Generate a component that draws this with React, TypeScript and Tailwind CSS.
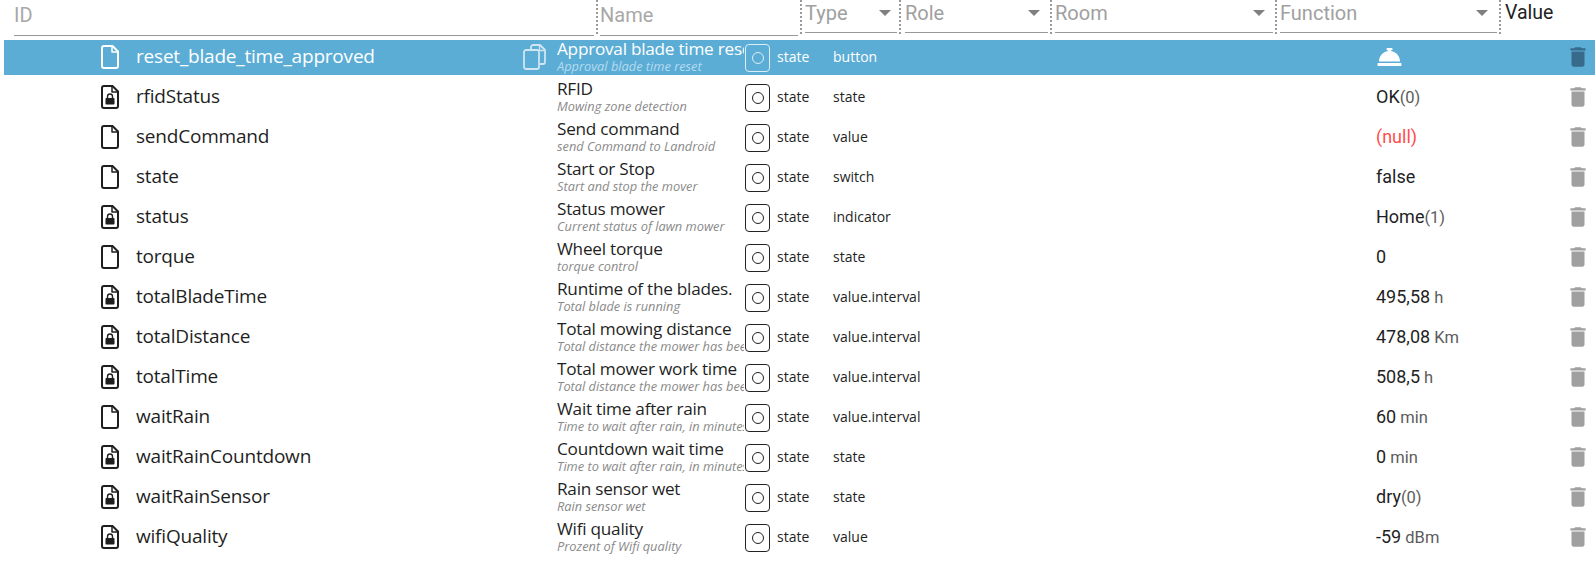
import { FaConciergeBell } from "react-icons/fa";
import { MdDelete } from "react-icons/md";

// ─── Data ─────────────────────────────────────────────────

interface Row {
  id: string;
  locked?: boolean;
  name: string;
  desc: string;
  role: string;
  value: string;
  unit?: string;
  selected?: boolean;
  isNull?: boolean;
  bell?: boolean;
}

const ROWS: Row[] = [
  { id: "reset_blade_time_approved", name: "Approval blade time reset", desc: "Approval blade time reset", role: "button", value: "", bell: true, selected: true },
  { id: "rfidStatus", locked: true, name: "RFID", desc: "Mowing zone detection", role: "state", value: "OK", unit: "(0)" },
  { id: "sendCommand", name: "Send command", desc: "send Command to Landroid", role: "value", value: "(null)", isNull: true },
  { id: "state", name: "Start or Stop", desc: "Start and stop the mover", role: "switch", value: "false" },
  { id: "status", locked: true, name: "Status mower", desc: "Current status of lawn mower", role: "indicator", value: "Home", unit: "(1)" },
  { id: "torque", name: "Wheel torque", desc: "torque control", role: "state", value: "0" },
  { id: "totalBladeTime", locked: true, name: "Runtime of the blades.", desc: "Total blade is running", role: "value.interval", value: "495,58", unit: " h" },
  { id: "totalDistance", locked: true, name: "Total mowing distance", desc: "Total distance the mower has been", role: "value.interval", value: "478,08", unit: " Km" },
  { id: "totalTime", locked: true, name: "Total mower work time", desc: "Total distance the mower has been", role: "value.interval", value: "508,5", unit: " h" },
  { id: "waitRain", name: "Wait time after rain", desc: "Time to wait after rain, in minutes", role: "value.interval", value: "60", unit: " min" },
  { id: "waitRainCountdown", locked: true, name: "Countdown wait time", desc: "Time to wait after rain, in minutes", role: "state", value: "0", unit: " min" },
  { id: "waitRainSensor", locked: true, name: "Rain sensor wet", desc: "Rain sensor wet", role: "state", value: "dry", unit: "(0)" },
  { id: "wifiQuality", locked: true, name: "Wifi quality", desc: "Prozent of Wifi quality", role: "value", value: "-59", unit: " dBm" },
];

const SELECTS = [
  { label: "Type", box: "w-[92px]", sep: "ml-[3px]", arrow: "mr-[6px]" },
  { label: "Role", box: "w-[143px]", sep: "ml-[4px]", arrow: "mr-[8px]" },
  { label: "Room", box: "w-[218px]", sep: "ml-[3px]", arrow: "mr-[8px]" },
  { label: "Function", box: "w-[217px]", sep: "ml-[3px]", arrow: "mr-[9px]" },
];

// ─── Icons ────────────────────────────────────────────────

function FileIcon({ locked }: { locked?: boolean }) {
  return (
    <svg viewBox="0 0 18 24" className="w-[18px] h-[24px]" fill="none" stroke="currentColor" strokeWidth="2" strokeLinejoin="round">
      <path d="M3 1h8.500L17 6.500V21a2 2 0 0 1-2 2H3a2 2 0 0 1-2-2V3a2 2 0 0 1 2-2z" />
      <path d="M11 1.500V7h5.500" strokeWidth="1.500" />
      {locked && (
        <>
          <rect x="4.500" y="13" width="9" height="6.500" rx="0.800" fill="currentColor" stroke="none" />
          <path d="M6.500 13.500V11.500a2.500 2.500 0 0 1 5 0v2" strokeWidth="1.400" />
        </>
      )}
    </svg>
  );
}

function CopyIcon() {
  return (
    <svg viewBox="0 0 23 26" className="w-[23px] h-[26px]" fill="none" stroke="currentColor" strokeWidth="1.800" strokeLinejoin="round">
      <path d="M8 5V3a2 2 0 0 1 2-2h7l5 5v12a2 2 0 0 1-2 2h-3" />
      <path d="M3 6h11a2 2 0 0 1 2 2v15a2 2 0 0 1-2 2H3a2 2 0 0 1-2-2V8a2 2 0 0 1 2-2z" />
      <path d="M16.500 1.500V6.500H21.500" strokeWidth="1.300" />
    </svg>
  );
}

function StateIcon({ selected }: { selected?: boolean }) {
  return (
    <div
      className={`shrink-0 mt-[2px] w-[25px] h-[28px] rounded-[4px] border-[1.5px] flex items-center justify-center ${
        selected ? "border-[#dcedf6]" : "border-[#222222]"
      }`}
    >
      <div className={`w-[12px] h-[12px] rounded-full border-[1.5px] ${selected ? "border-[#dcedf6]" : "border-[#222222]"}`} />
    </div>
  );
}

// ─── Table parts ──────────────────────────────────────────

function Dots() {
  return <div className="h-[34px] self-start border-l-2 border-dotted border-[#9a9a9a]" />;
}

function Header() {
  return (
    <div className="flex h-[40px] font-['Roboto',sans-serif]">
      <div className="ml-[14px] w-[580px] h-[36px] border-b border-[#999999] text-[20px] leading-[30px] text-[#a8a8a8]">ID</div>
      <div className="ml-[2px]"><Dots /></div>
      <div className="ml-[2px] w-[198px] h-[36px] border-b border-[#999999] text-[20px] leading-[30px] text-[#a8a8a8]">Name</div>
      {SELECTS.map((s) => (
        <div key={s.label} className="flex">
          <div className="ml-[2px]"><Dots /></div>
          <div className={`${s.sep} ${s.box} h-[33px] border-b border-[#999999] flex justify-between text-[20px] leading-[27px] text-[#a0a0a0]`}>
            <span>{s.label}</span>
            <span className={`${s.arrow} mt-[10px] w-0 h-0 border-x-[6px] border-x-transparent border-t-[6px] border-t-[#808080]`} />
          </div>
        </div>
      ))}
      <div className="ml-[2px]"><Dots /></div>
      <div className="ml-[4px] text-[19.500px] leading-[25px] text-[#222222]">Value</div>
    </div>
  );
}

function TableRow({ row }: { row: Row }) {
  const sel = row.selected;
  return (
    <div
      className={`flex items-center ml-[4px] h-[35px] mb-[5px] pb-[2px] font-['Open_Sans',sans-serif] ${
        sel ? "bg-[#5badd6] text-white" : "text-[#1f1f1f]"
      }`}
    >
      <div className="w-[97px] shrink-0" />
      <div className="w-[35px] shrink-0 flex">
        <FileIcon locked={row.locked} />
      </div>
      <div className="w-[387px] shrink-0 text-[19px] tracking-[-0.2px] whitespace-nowrap">{row.id}</div>
      <div className={`w-[34px] shrink-0 flex ${sel ? "text-[#cfe6f3]" : "invisible"}`}>
        <CopyIcon />
      </div>
      <div className="w-[187px] mr-[1px] shrink-0 overflow-hidden whitespace-nowrap">
        <div className="text-[17.200px] leading-[19px] tracking-[-0.25px]">{row.name}</div>
        <div className={`text-[12.800px] leading-[17px] italic ${sel ? "text-[#b5dbee]" : "text-[#8a8a8a]"}`}>{row.desc}</div>
      </div>
      <StateIcon selected={sel} />
      <div className="ml-[7px] w-[56px] shrink-0 text-[14px]">state</div>
      <div className="w-[543px] shrink-0 text-[14px]">{row.role}</div>
      <div className="w-[189px] shrink-0 font-['Roboto',sans-serif] text-[18px] whitespace-pre">
        {row.bell && <FaConciergeBell className="w-[27px] h-[24px]" />}
        {row.isNull ? <span className="text-[#ff4d4d]">{row.value}</span> : row.value}
        {row.unit && <span className="text-[#5c5c5c] text-[16.500px]">{row.unit}</span>}
      </div>
      <MdDelete className={`shrink-0 w-[26px] h-[30px] ${sel ? "text-[#386a8b]" : "text-[#a0a0a0]"}`} />
    </div>
  );
}

export default function App() {
  return (
    <div className="w-[1595px] h-[563px] overflow-hidden bg-white">
      <Header />
      {ROWS.map((row) => (
        <TableRow key={row.id} row={row} />
      ))}
    </div>
  );
}
